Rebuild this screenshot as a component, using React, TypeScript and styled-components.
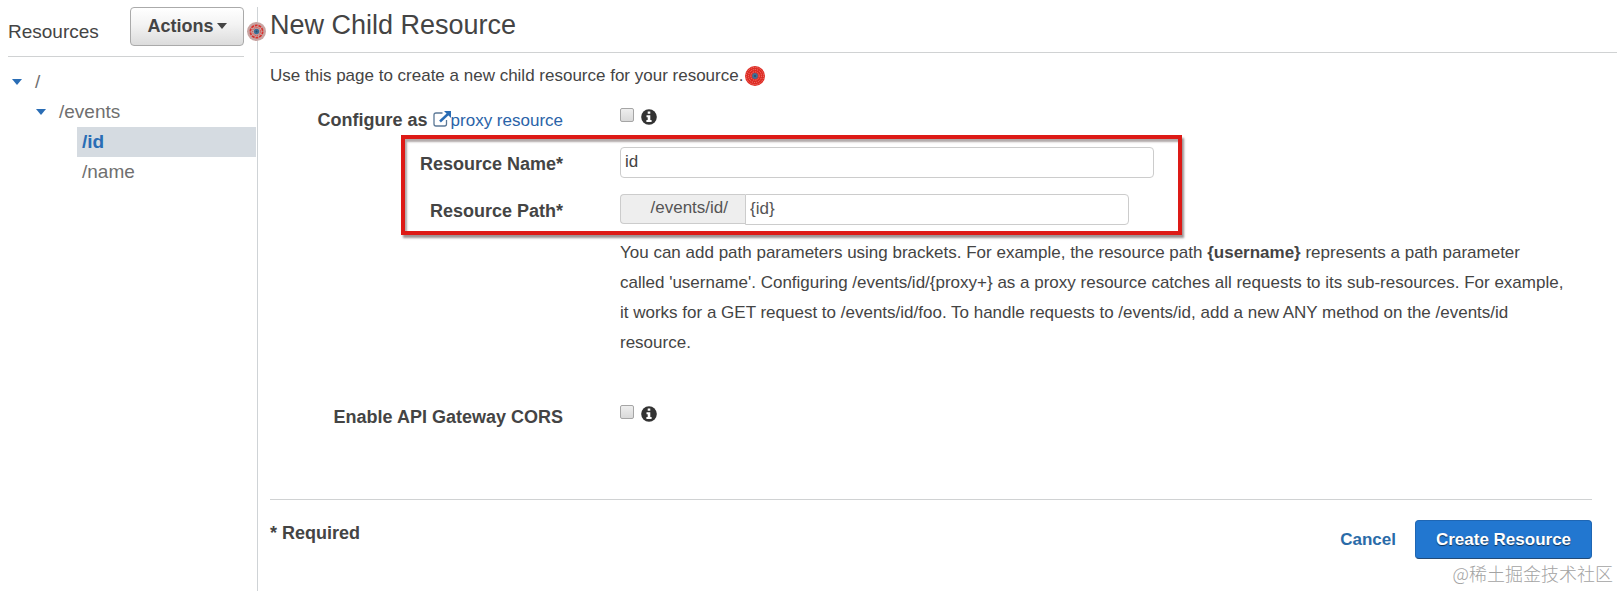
import React from "react";
import styled, { createGlobalStyle } from "styled-components";

const GlobalStyle = createGlobalStyle`
  * { box-sizing: border-box; }
  body {
    margin: 0;
    background: #fff;
    color: #444;
    font-family: "Liberation Sans", Arial, sans-serif;
    font-size: 17px;
    line-height: 30px;
  }
  button, input { font: inherit; color: inherit; }
`;

const Page = styled.div`
  display: flex;
  min-height: 100vh;
  padding-top: 7px;
  position: relative;
`;

const Sidebar = styled.nav`
  flex: none;
  width: 258px;
  border-right: 1px solid #cfd3d6;
`;

const SidebarHeader = styled.div`
  display: flex;
  justify-content: space-between;
  align-items: flex-start;
  height: 50px;
  margin: 0 13px 10px 8px;
  border-bottom: 1px solid #d0d2d3;
`;

const SidebarTitle = styled.h2`
  margin: 10px 0 0;
  font-size: 19px;
  font-weight: 400;
`;

const ActionsButton = styled.button`
  display: flex;
  align-items: center;
  justify-content: center;
  gap: 3px;
  width: 114px;
  height: 39px;
  padding: 0 0 2px;
  border: 1px solid #aaa;
  border-radius: 4px;
  background: linear-gradient(#fff, #f3f3f3 45%, #dcdcdc);
  font-size: 18px;
  font-weight: 700;
`;

const Tree = styled.ul`
  margin: 0;
  padding: 0;
  list-style: none;
`;

const TreeItem = styled.li<{ $depth: number; $leaf?: boolean; $selected?: boolean }>`
  display: flex;
  align-items: center;
  gap: ${(p) => (p.$leaf ? 0 : 13)}px;
  height: 30px;
  margin-left: ${(p) => (p.$leaf ? 77 : 12 + p.$depth * 24)}px;
  margin-right: 1px;
  padding-left: ${(p) => (p.$leaf ? 5 : 0)}px;
  background: ${(p) => (p.$selected ? "#d5dbe1" : "none")};
`;

const TreeLink = styled.a<{ $selected?: boolean }>`
  color: ${(p) => (p.$selected ? "#2a6db5" : "#6f6f6f")};
  font-size: 19px;
  font-weight: ${(p) => (p.$selected ? 700 : 400)};
  line-height: 30px;
  text-decoration: none;
`;

const Main = styled.main`
  flex: 1;
  min-width: 0;
  padding: 0 3px 0 12px;
`;

const Title = styled.h1`
  height: 46px;
  margin: 0 0 8px;
  padding-top: 3px;
  border-bottom: 1px solid #d0d2d3;
  font-size: 27px;
  font-weight: 400;
  line-height: 30px;
`;

const Intro = styled.p`
  display: flex;
  align-items: center;
  gap: 2px;
  margin: 0 0 12px;
`;

const Form = styled.form`
  margin-right: 25px;
`;

const Field = styled.div`
  display: grid;
  grid-template-columns: 293px minmax(0, 1fr);
  column-gap: 57px;
  align-items: start;
`;

const OptionField = styled(Field)`
  height: 44px;
`;

const FieldLabel = styled.label`
  padding-top: 2px;
  font-size: 18px;
  font-weight: 700;
  text-align: right;
`;

const DocLink = styled.a`
  color: #2a63a8;
  font-size: 17px;
  font-weight: 400;
  text-decoration: none;
  svg { vertical-align: -1px; }
`;

const OptionControls = styled.div`
  display: flex;
  align-items: center;
  gap: 7px;
  height: 27px;
`;

const Checkbox = styled.input`
  appearance: none;
  width: 14px;
  height: 14px;
  margin: 0 0 4px;
  border: 1px solid #a5a5a5;
  border-radius: 2px;
  background: linear-gradient(#eee, #d9d9d9);
  &:checked { background: #2a6db5; }
`;

const Highlighted = styled.div`
  display: grid;
  row-gap: 15px;
  position: relative;
`;

const HighlightFrame = styled.div`
  position: absolute;
  top: -12px;
  bottom: -9px;
  left: 131px;
  width: 781px;
  border: 4px solid #dd1a16;
  box-shadow: 2px 3px 2px rgba(60, 40, 40, 0.5), inset 2px 3px 2px rgba(60, 40, 40, 0.4);
  pointer-events: none;
`;

const TextInput = styled.input`
  width: 534px;
  max-width: 100%;
  height: 31px;
  padding: 0 5px 2px 4px;
  border: 1px solid #ccc;
  border-radius: 4px;
  background: #fff;
`;

const PathGroup = styled.div`
  display: flex;
  width: 509px;
  max-width: 100%;
`;

const PathPrefix = styled.span`
  width: 125px;
  height: 30px;
  padding-right: 17px;
  border: 1px solid #ccc;
  border-right: 0;
  border-radius: 4px 0 0 4px;
  background: #eee;
  color: #555;
  line-height: 26px;
  text-align: right;
`;

const PathInput = styled(TextInput)`
  flex: 1;
  width: auto;
  min-width: 0;
  border-radius: 0 4px 4px 0;
  color: #555;
`;

const Help = styled.p`
  grid-column: 2;
  max-width: 946px;
  margin: 12px 0 42px;
`;

const Footer = styled.footer`
  display: flex;
  align-items: flex-start;
  justify-content: space-between;
  margin-top: 55px;
  padding-top: 20px;
  border-top: 1px solid #d0d2d3;
`;

const Required = styled.strong`
  font-size: 18px;
  line-height: 26px;
`;

const FormActions = styled.div`
  display: flex;
  align-items: center;
  gap: 19px;
`;

const CancelLink = styled.a`
  color: #2a6ba8;
  font-weight: 700;
  text-decoration: none;
`;

const CreateButton = styled.button`
  width: 177px;
  height: 39px;
  padding: 0;
  border: 1px solid #1f66b3;
  border-bottom-color: #234a75;
  border-radius: 4px;
  background: #2277d0;
  color: #fff;
  font-weight: 700;
  text-shadow: 0 1px 1px rgba(0, 0, 0, 0.6);
`;

const Watermark = styled.span`
  position: absolute;
  right: 7px;
  bottom: 3px;
  color: #a3a3a3;
  font-family: "Noto Sans CJK SC", sans-serif;
  font-size: 18px;
  font-weight: 300;
`;

const SidebarMarker = styled.span`
  position: absolute;
  top: 22px;
  left: 247px;
  line-height: 0;
`;

const Caret = ({ color, width }: { color: string; width: number }) => (
  <svg width={width} height={width / 2 + 1} viewBox="0 0 10 6" aria-hidden="true">
    <path d="M0 0h10L5 6z" fill={color} />
  </svg>
);

const Marker = ({ size, muted }: { size: number; muted?: boolean }) => (
  <svg width={size} height={size} viewBox="0 0 20 20" aria-hidden="true">
    <circle cx="10" cy="10" r="10" fill={muted ? "#c9a5a3" : "#de2a22"} />
    <circle cx="10" cy="10" r="8.6" fill="none" stroke={muted ? "#c2a09e" : "#f0968f"} strokeWidth="0.8" strokeDasharray="1 1" />
    <circle cx="10" cy="10" r="6.5" fill="none" stroke={muted ? "#d8302c" : "#f0968f"} strokeWidth={muted ? 1.8 : 0.8} strokeDasharray={muted ? "3 1" : "1 1"} />
    <circle cx="10" cy="10" r="4.2" fill="none" stroke={muted ? "#d8302c" : "#ee7f78"} strokeWidth="0.9" strokeDasharray="1.4 1" />
    <circle cx="10" cy="10" r="2.9" fill="#3e6f96" />
    <circle cx="10" cy="10" r="1" fill="#2b4a66" />
  </svg>
);

const ExternalIcon = () => (
  <svg width="18" height="16" viewBox="0 0 18 16" fill="none" aria-hidden="true">
    <path d="M9.500 2H3Q1 2 1 4v9q0 2 2 2h8.500q2 0 2-2V9" stroke="#5b7896" strokeWidth="1.300" />
    <path d="M7 10.500L15 3" stroke="#2a6db5" strokeWidth="2.400" />
    <path d="M11 0H18v7z" fill="#2a6db5" />
  </svg>
);

const InfoIcon = () => (
  <svg width="16" height="16" viewBox="0 0 16 16" aria-hidden="true">
    <circle cx="8" cy="8" r="7.800" fill="#333" />
    <path d="M6.700 2.500h2.600v2.300H6.700zM5.500 6.300h3.800v4.700h1.300v2H5.400v-2h1.300V8.200H5.500z" fill="#fff" />
  </svg>
);

export default function App() {
  return (
    <>
      <GlobalStyle />
      <Page>
        <Sidebar>
          <SidebarHeader>
            <SidebarTitle>Resources</SidebarTitle>
            <ActionsButton type="button">
              Actions
              <Caret color="#444" width={10} />
            </ActionsButton>
          </SidebarHeader>
          <Tree>
            <TreeItem $depth={0}>
              <Caret color="#2a6db5" width={10} />
              <TreeLink href="#root">/</TreeLink>
            </TreeItem>
            <TreeItem $depth={1}>
              <Caret color="#2a6db5" width={10} />
              <TreeLink href="#events">/events</TreeLink>
            </TreeItem>
            <TreeItem $depth={2} $leaf $selected>
              <TreeLink href="#id" $selected>/id</TreeLink>
            </TreeItem>
            <TreeItem $depth={2} $leaf>
              <TreeLink href="#name">/name</TreeLink>
            </TreeItem>
          </Tree>
        </Sidebar>
        <Main>
          <Title>New Child Resource</Title>
          <Intro>
            Use this page to create a new child resource for your resource.
            <Marker size={20} />
          </Intro>
          <Form onSubmit={(e) => e.preventDefault()}>
            <OptionField>
              <FieldLabel htmlFor="proxy">
                Configure as{" "}
                <DocLink href="#proxy-resource">
                  <ExternalIcon />
                  proxy resource
                </DocLink>
              </FieldLabel>
              <OptionControls>
                <Checkbox type="checkbox" id="proxy" />
                <InfoIcon />
              </OptionControls>
            </OptionField>
            <Highlighted>
              <Field>
                <FieldLabel htmlFor="name">Resource Name*</FieldLabel>
                <TextInput id="name" defaultValue="id" />
              </Field>
              <Field>
                <FieldLabel htmlFor="path">Resource Path*</FieldLabel>
                <PathGroup>
                  <PathPrefix>/events/id/</PathPrefix>
                  <PathInput id="path" defaultValue="{id}" />
                </PathGroup>
              </Field>
              <HighlightFrame />
            </Highlighted>
            <Field>
              <Help>
                You can add path parameters using brackets. For example, the resource path{" "}
                <b>{"{username}"}</b>
                {" represents a path parameter called 'username'. Configuring /events/id/{proxy+} as a proxy resource catches all requests to its sub-resources. For example, it works for a GET request to /events/id/foo. To handle requests to /events/id, add a new ANY method on the /events/id resource."}
              </Help>
            </Field>
            <OptionField>
              <FieldLabel htmlFor="cors">Enable API Gateway CORS</FieldLabel>
              <OptionControls>
                <Checkbox type="checkbox" id="cors" />
                <InfoIcon />
              </OptionControls>
            </OptionField>
            <Footer>
              <Required>* Required</Required>
              <FormActions>
                <CancelLink href="#cancel">Cancel</CancelLink>
                <CreateButton type="submit">Create Resource</CreateButton>
              </FormActions>
            </Footer>
          </Form>
        </Main>
        <SidebarMarker>
          <Marker size={19} muted />
        </SidebarMarker>
        <Watermark>@稀土掘金技术社区</Watermark>
      </Page>
    </>
  );
}
